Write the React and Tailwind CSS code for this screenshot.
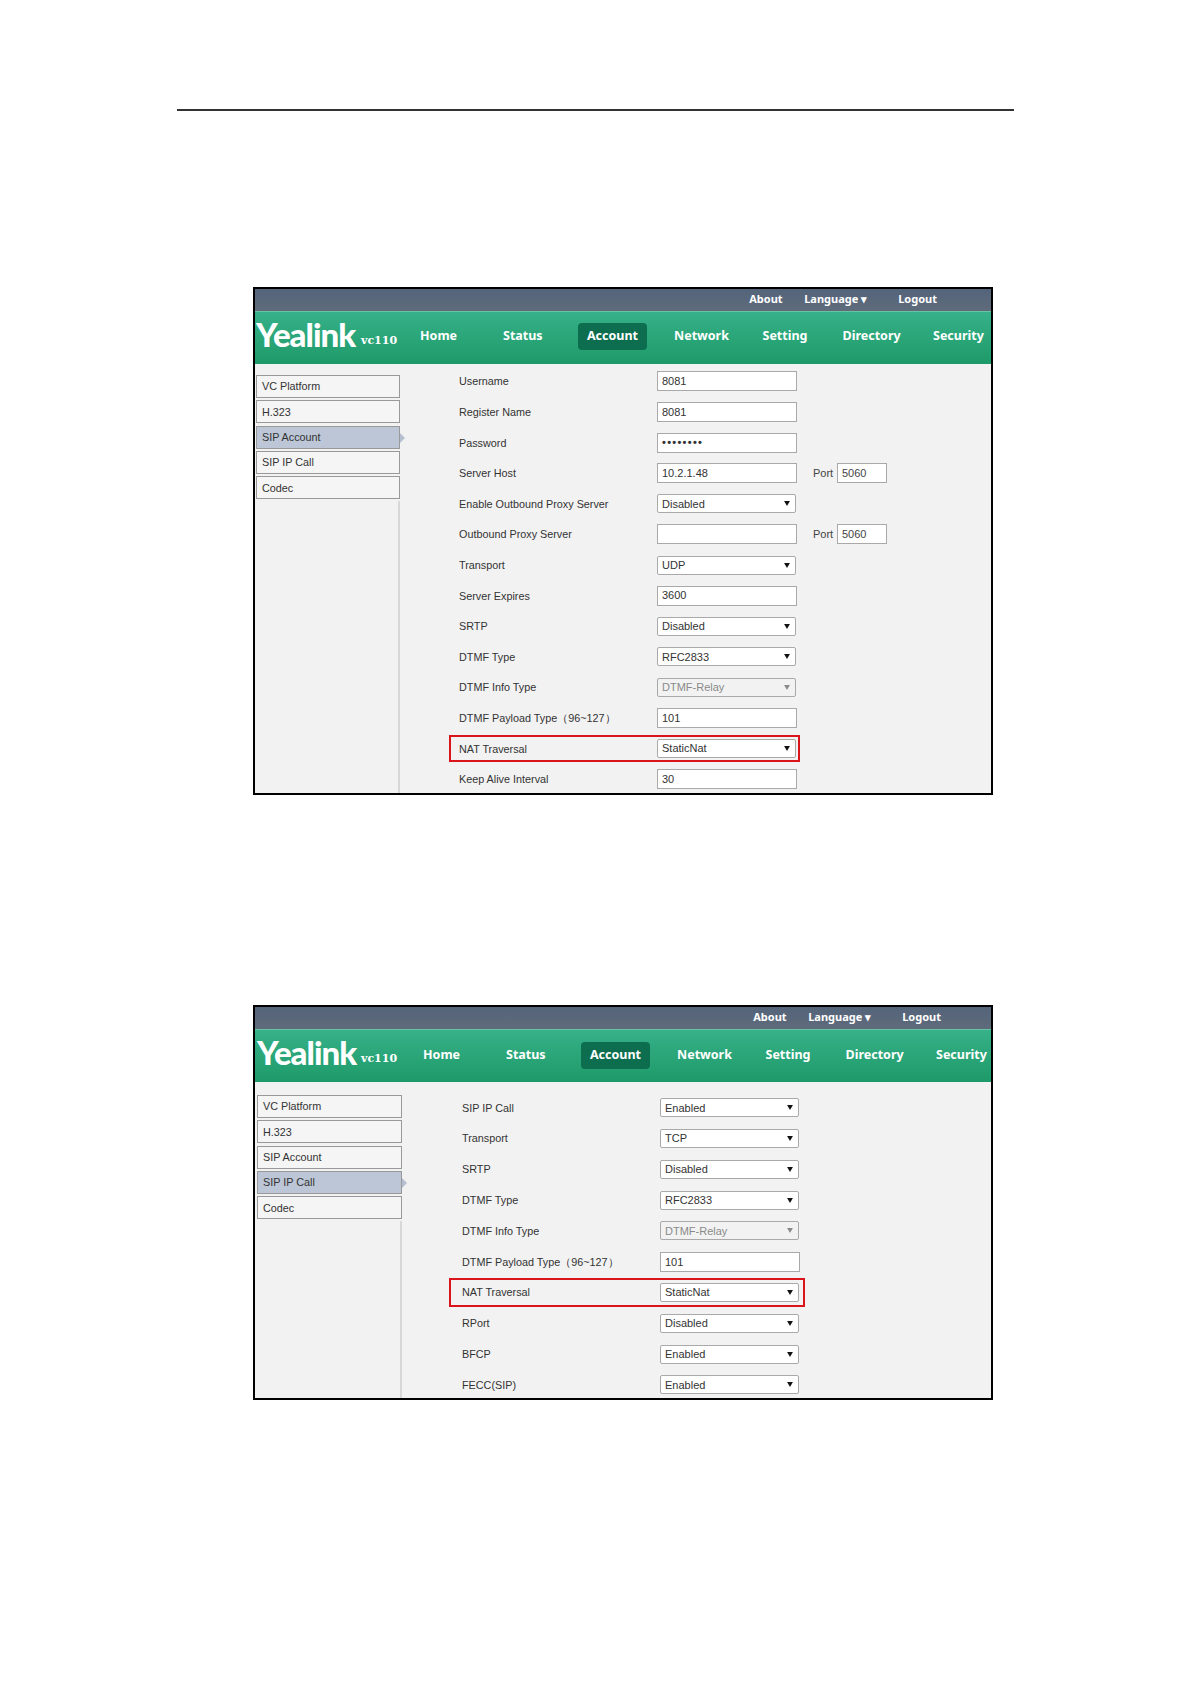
const bodyFont = 'font-["Liberation_Sans",sans-serif]'

function Caret({ off }) {
  return (
    <svg width="6" height="5" viewBox="0 0 7 6" className="shrink-0 mr-px">
      <path d="M0 0h7L3.5 6z" fill={off ? "#8a8a8a" : "#111"} />
    </svg>
  )
}

function Field({ value, port, muted }) {
  return (
    <div className="flex items-center">
      <div className={`w-[140px] h-[20px] border border-[#a9a9a9] bg-white px-1 flex items-center text-[11px] ${muted ? "tracking-[1.3px] font-bold" : ""} text-[#333]`}>
        {value}
      </div>
      {port && (
        <>
          <span className="ml-[16px] w-[24px] text-[11px] text-[#444]">Port</span>
          <div className="w-[50px] h-[20px] border border-[#a9a9a9] bg-white px-1 flex items-center text-[11px] text-[#444]">5060</div>
        </>
      )}
    </div>
  )
}

function Select({ value, off }) {
  return (
    <div className={`w-[139px] h-[19px] border border-[#a9a9a9] rounded-[2px] pl-1 pr-[4px] flex items-center justify-between text-[11px] ${off ? "bg-[#f2f2f2] text-[#8a8a8a]" : "bg-white text-[#333]"}`}>
      {value}
      <Caret off={off} />
    </div>
  )
}

function Row({ row, className }) {
  return (
    <div className={`flex items-center relative ${className}`}>
      <span className="w-[198px] text-[10.8px] text-[#333]">{row.label}</span>
      {row.select ? <Select value={row.value} off={row.off} /> : <Field value={row.value} port={row.port} muted={row.pass} />}
      {row.mark && <div className={`absolute border-2 border-[#d9141b] ${row.mark}`} />}
    </div>
  )
}

function Panel({ active, rows, className, shift, rowH, asideW, tabW, side, topBar, asidePad, mainPad, navUp }) {
  const tabs = ["VC Platform", "H.323", "SIP Account", "SIP IP Call", "Codec"]
  return (
    <section className={`w-[740px] ml-[253px] border-2 border-black bg-[#f2f2f2] overflow-hidden ${className} ${bodyFont}`}>
      <div className={`h-[22px] bg-gradient-to-b from-[#54647a] to-[#5f6b7b] flex items-center justify-end pb-[2px] gap-[22px] font-['Noto_Sans',sans-serif] font-bold text-[11px] text-white ${topBar}`}>
        <span className="w-[32px]">About</span>
        <span className="w-[64px] ml-[1px]">Language ▾</span>
        <span className="ml-[8px]">Logout</span>
      </div>
      <div className="h-[53px] border-t border-[#67c4a3] bg-gradient-to-b from-[#36b189] to-[#1d9a69] flex items-center text-white">
        <div className={`w-[103px] pb-[8px] font-['Lato',sans-serif] font-black text-[33px] tracking-[-1px] leading-none ${side}`}>Yealink</div>
        <span className="w-[60px] pt-[6px] pl-[3px] font-['DejaVu_Serif',serif] font-bold text-[11px]">vc110</span>
        <nav className={`flex items-center font-['Noto_Sans',sans-serif] font-bold text-[12.5px] ${shift} ${navUp}`}>
          <span className="w-[85px] pl-[2px]">Home</span>
          <span className="w-[75px]">Status</span>
          <span className="w-[69px] h-[27px] rounded-[4px] bg-[#0c6e4e] flex items-center justify-center">Account</span>
          <span className="w-[100.5px] pl-[27px]">Network</span>
          <span className="w-[83px] pl-[15px]">Setting</span>
          <span className="w-[102.5px] pl-[12px]">Directory</span>
          <span>Security</span>
        </nav>
      </div>
      <div className="flex">
        <aside className={`${asideW} ${asidePad} h-[500px] flex flex-col gap-[2.3px] ${side}`}>
          {tabs.map((tab) => (
            <div key={tab} className={`relative h-[23px] ${tabW} shrink-0 border border-[#999] pl-[5px] flex items-center text-[10.8px] text-[#333] ${tab === active ? "bg-[#bcc6d6]" : "bg-[#f5f5f5]"}`}>
              {tab}
              {tab === active && <div className="absolute right-[-6px] top-[6px] w-0 h-0 border-y-[5px] border-y-transparent border-l-[5px] border-l-[#b5bfcf]" />}
            </div>
          ))}
          <div className={`flex-1 ${tabW} border-r-2 border-[#d8d8d8]`} />
        </aside>
        <main className={`pl-[59px] ${mainPad}`}>
          {rows.map((row) => <Row key={row.label} row={row} className={rowH} />)}
        </main>
      </div>
    </section>
  )
}

const accountRows = [
  { label: "Username", value: "8081" },
  { label: "Register Name", value: "8081" },
  { label: "Password", value: "••••••••", pass: true },
  { label: "Server Host", value: "10.2.1.48", port: true },
  { label: "Enable Outbound Proxy Server", value: "Disabled", select: true },
  { label: "Outbound Proxy Server", value: "", port: true },
  { label: "Transport", value: "UDP", select: true },
  { label: "Server Expires", value: "3600" },
  { label: "SRTP", value: "Disabled", select: true },
  { label: "DTMF Type", value: "RFC2833", select: true },
  { label: "DTMF Info Type", value: "DTMF-Relay", select: true, off: true },
  { label: "DTMF Payload Type（96~127）", value: "101" },
  { label: "NAT Traversal", value: "StaticNat", select: true, mark: "left-[-10px] top-[2px] w-[351px] h-[27px]" },
  { label: "Keep Alive Interval", value: "30" },
]

const callRows = [
  { label: "SIP IP Call", value: "Enabled", select: true },
  { label: "Transport", value: "TCP", select: true },
  { label: "SRTP", value: "Disabled", select: true },
  { label: "DTMF Type", value: "RFC2833", select: true },
  { label: "DTMF Info Type", value: "DTMF-Relay", select: true, off: true },
  { label: "DTMF Payload Type（96~127）", value: "101" },
  { label: "NAT Traversal", value: "StaticNat", select: true, mark: "left-[-13px] top-[1px] w-[356px] h-[29px]" },
  { label: "RPort", value: "Disabled", select: true },
  { label: "BFCP", value: "Enabled", select: true },
  { label: "FECC(SIP)", value: "Enabled", select: true },
]

export default function App() {
  return (
    <div className="w-[1191px] h-[1684px] bg-white overflow-hidden pt-[109px]">
      <div className="ml-[177px] w-[837px] h-[2px] bg-[#333]" />
      <div className="mt-[176px]">
        <Panel active="SIP Account" rows={accountRows} className="h-[508px]" rowH="h-[30.6px]" asideW="w-[145px]" tabW="w-[144px]" shift="ml-0" side="pl-px" topBar="pr-[54px]" asidePad="pt-[11px]" mainPad="pt-[2.2px]" navUp="pb-[3px]" />
      </div>
      <div className="mt-[210px]">
        <Panel active="SIP IP Call" rows={callRows} className="h-[395px]" rowH="h-[30.8px]" asideW="w-[148px]" tabW="w-[145px]" shift="ml-[3px]" side="pl-[2px]" topBar="pr-[50px]" asidePad="pt-[13px]" mainPad="pt-[10.4px]" navUp="pb-[1px]" />
      </div>
    </div>
  )
}
